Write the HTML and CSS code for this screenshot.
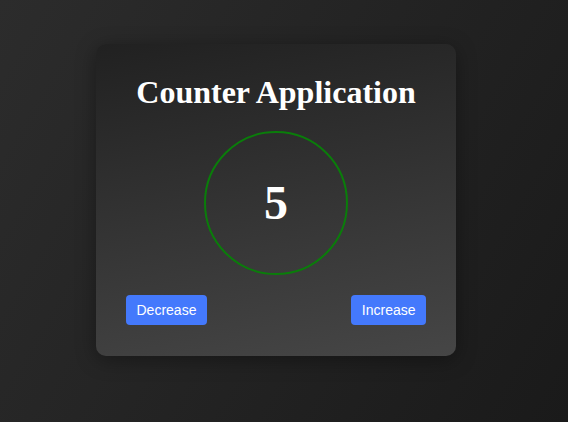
FILE: index.html
```html
<!DOCTYPE html>
<html lang="en">
<head>
<meta charset="utf-8">
<title>Counter Application</title>
<link rel="stylesheet" href="styles.css">
</head>
<body>
  <main class="card">
    <h1 class="title">Counter Application</h1>
    <div class="counter">5</div>
    <div class="actions">
      <button class="btn">Decrease</button>
      <button class="btn">Increase</button>
    </div>
  </main>
</body>
</html>
```
FILE: styles.css
```css
* { box-sizing: border-box; }
html, body { height: 100%; }
body {
  margin: 0;
  min-height: 100vh;
  display: flex;
  align-items: center;
  justify-content: center;
  padding: 0 16px 22px 0;
  background: linear-gradient(120deg, #2c2c2c 0%, #1a1a1a 100%);
  font-family: "Liberation Serif", "Times New Roman", serif;
}
.card {
  width: 360px;
  height: 312px;
  padding: 30px;
  border-radius: 10px;
  background: linear-gradient(170deg, #212121 0%, #464646 100%);
  box-shadow: 0 4px 20px rgba(0, 0, 0, 0.35);
  display: flex;
  flex-direction: column;
  align-items: center;
  gap: 20px;
}
.title {
  margin: 0;
  font-size: 32px;
  font-weight: bold;
  color: #fff;
  line-height: 37px;
}
.counter {
  width: 144px;
  height: 144px;
  border: 2px solid #0a7d0a;
  border-radius: 50%;
  display: flex;
  align-items: center;
  justify-content: center;
  color: #fff;
  font-size: 48px;
  font-weight: bold;
  padding-bottom: 2px;
}
.actions {
  align-self: stretch;
  display: flex;
  justify-content: space-between;
}
.btn {
  height: 30px;
  padding: 0 10.5px;
  border: none;
  border-radius: 4px;
  background: #4479fc;
  color: #fff;
  font-family: "Liberation Sans", Arial, sans-serif;
  font-size: 14px;
  cursor: pointer;
}
```
